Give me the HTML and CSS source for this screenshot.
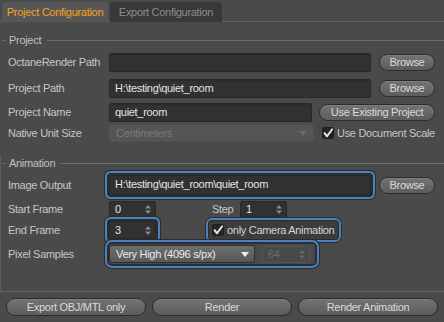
FILE: index.html
```html
<!DOCTYPE html>
<html>
<head>
<meta charset="utf-8">
<link rel="stylesheet" href="styles.css">
</head>
<body>
<div class="app">
  <div class="tabs">
    <div class="tab active">Project Configuration</div>
    <div class="tab inactive">Export Configuration</div>
  </div>

  <section class="group project">
    <div class="legend"><span class="legend-text">Project</span></div>
    <div class="row r-octane">
      <span class="lbl">OctaneRender Path</span>
      <div class="input path"></div>
      <button class="btn browse">Browse</button>
    </div>
    <div class="row r-path">
      <span class="lbl">Project Path</span>
      <div class="input path">H:\testing\quiet_room</div>
      <button class="btn browse">Browse</button>
    </div>
    <div class="row r-name">
      <span class="lbl">Project Name</span>
      <div class="input name">quiet_room</div>
      <button class="btn existing">Use Existing Project</button>
    </div>
    <div class="row r-unit">
      <span class="lbl">Native Unit Size</span>
      <div class="select disabled unit">
        <span>Centimeters</span>
        <svg class="arrow" width="8" height="5" viewBox="0 0 8 5"><path d="M0 0H8L4 5Z" fill="#6a6a6a"/></svg>
      </div>
      <label class="check doc">
        <span class="box"><svg width="12" height="12" viewBox="0 0 12 12"><path d="M2.6 6.2L5 9.3L10.2 2.2" fill="none" stroke="#ececec" stroke-width="1.9" stroke-linecap="round" stroke-linejoin="round"/></svg></span>
        <span>Use Document Scale</span>
      </label>
    </div>
  </section>

  <section class="group animation">
    <div class="legend"><span class="legend-text">Animation</span></div>
    <div class="row r-output">
      <span class="lbl">Image Output</span>
      <div class="input path focus">H:\testing\quiet_room\quiet_room</div>
      <button class="btn browse">Browse</button>
    </div>
    <div class="row r-start">
      <span class="lbl">Start Frame</span>
      <div class="spin"><span>0</span><svg class="updown" width="6" height="9" viewBox="0 0 6 9"><path d="M0 3.5L3 0L6 3.5Z M0 5.5H6L3 9Z" fill="#8a8a8a"/></svg></div>
      <span class="step-lbl">Step</span>
      <div class="spin"><span>1</span><svg class="updown" width="6" height="9" viewBox="0 0 6 9"><path d="M0 3.5L3 0L6 3.5Z M0 5.5H6L3 9Z" fill="#8a8a8a"/></svg></div>
    </div>
    <div class="row r-end">
      <span class="lbl">End Frame</span>
      <div class="spin focus"><span>3</span><svg class="updown" width="6" height="9" viewBox="0 0 6 9"><path d="M0 3.5L3 0L6 3.5Z M0 5.5H6L3 9Z" fill="#8a8a8a"/></svg></div>
      <label class="check cam">
        <span class="box"><svg width="12" height="12" viewBox="0 0 12 12"><path d="M2.6 6.2L5 9.3L10.2 2.2" fill="none" stroke="#ececec" stroke-width="1.9" stroke-linecap="round" stroke-linejoin="round"/></svg></span>
        <span>only Camera Animation</span>
      </label>
    </div>
    <div class="row r-samples">
      <span class="lbl">Pixel Samples</span>
      <div class="samples focus">
        <div class="select quality">
          <span>Very High (4096 s/px)</span>
          <svg class="arrow" width="8" height="5" viewBox="0 0 8 5"><path d="M0 0H8L4 5Z" fill="#f0f0f0"/></svg>
        </div>
        <div class="spin disabled"><span>64</span><svg class="updown" width="6" height="9" viewBox="0 0 6 9"><path d="M0 3.5L3 0L6 3.5Z M0 5.5H6L3 9Z" fill="#666"/></svg></div>
      </div>
    </div>
  </section>

  <div class="actions">
    <button class="btn action">Export OBJ/MTL only</button>
    <button class="btn action">Render</button>
    <button class="btn action">Render Animation</button>
  </div>
</div>
</body>
</html>
```

FILE: styles.css
```css
html, body {
  margin: 0;
  padding: 0;
}
body {
  width: 444px;
  height: 322px;
  overflow: hidden;
  background: #4a4a4a;
  font-family: "Liberation Sans", Arial, sans-serif;
  font-size: 11px;
  letter-spacing: -0.3px;
  white-space: nowrap;
  color: #c6c6c6;
}
.app {
  display: flex;
  flex-direction: column;
}

/* tabs */
.tabs {
  display: flex;
  gap: 2px;
  height: 22px;
  box-sizing: border-box;
  padding: 2px 0 0 2px;
  border-bottom: 1px solid #626262;
}
.tab {
  height: 20px;
  line-height: 20px;
  box-sizing: border-box;
  text-align: center;
  border-radius: 3px 3px 0 0;
}
.tab.active {
  width: 106px;
  background: #575757;
  color: #f5a11e;
}
.tab.inactive {
  width: 112px;
  background: #383838;
  color: #8d8d8d;
}

/* groups */
.group {
  display: flex;
  flex-direction: column;
}
.project {
  margin-top: 11px;
}
.animation {
  margin-top: 12px;
  border-left: 1px solid #5f5f5f;
  border-bottom: 1px solid #666;
  padding-bottom: 27px;
}
.legend {
  display: flex;
  align-items: center;
  height: 14px;
}
.legend::before {
  content: "";
  width: 4px;
  height: 1px;
  margin: 0 3px 0 2px;
  background: #6c6c6c;
}
.animation .legend::before {
  margin-left: 1px;
}
.legend::after {
  content: "";
  flex: 1;
  height: 1px;
  margin-left: 6px;
  background: #6c6c6c;
}
.legend-text {
  color: #c0c0c0;
}

/* rows */
.row {
  display: flex;
  align-items: center;
  height: 22px;
  padding-left: 8px;
}
.animation .row {
  padding-left: 7px;
}
.r-octane { margin-top: 4px; }
.r-path { margin-top: 4px; }
.r-name { margin-top: 2px; }
.r-unit { margin-top: -1px; }
.r-output { margin-top: 4px; }
.r-start { margin-top: 3px; height: 20px; }
.r-end { margin-top: 1px; height: 20px; }
.r-samples { margin-top: 4px; height: 20px; }

.lbl {
  width: 101px;
  flex: none;
  color: #c6c6c6;
}

/* inputs */
.input {
  height: 19px;
  box-sizing: border-box;
  background: #313131;
  border: 1px solid #282828;
  border-radius: 2px;
  box-shadow: inset 0 1px 0 #2a2a2a;
  color: #e4e4e4;
  line-height: 17px;
  padding-left: 5px;
}
.input.path { width: 262px; }
.input.name { width: 203px; }

.focus {
  box-shadow: 0 0 0 2px #2d2d2d, 0 0 0 4px #4c81bd, 0 0 0 5px #2c2c2c;
  border-radius: 2px;
}
.input.focus {
  height: 20px;
}

/* buttons */
.btn {
  font: inherit;
  letter-spacing: inherit;
  color: #dadada;
  height: 17px;
  padding: 0;
  box-sizing: border-box;
  border: 1px solid #2c2c2c;
  border-radius: 9px;
  background: linear-gradient(#747474, #5c5c5c);
  box-shadow: inset 0 1px 0 rgba(255,255,255,0.08);
  line-height: 15px;
  text-align: center;
}
.btn.browse {
  width: 56px;
  margin-left: 8px;
}
.btn.existing {
  width: 116px;
  margin-left: 7px;
}

/* selects */
.select {
  display: flex;
  align-items: center;
  justify-content: space-between;
  height: 18px;
  box-sizing: border-box;
  border-radius: 3px;
  padding: 0 6px 0 6px;
}
.select.disabled {
  width: 205px;
  background: #555;
  color: #7a7a7a;
  border: 1px solid #505050;
}
.select.quality {
  width: 146px;
  background: linear-gradient(#6e6e6e, #585858);
  border: 1px solid #2e2e2e;
  color: #ececec;
  padding-right: 5px;
}

/* checkboxes */
.check {
  display: flex;
  align-items: center;
  gap: 3px;
}
.box {
  width: 12px;
  height: 12px;
  box-sizing: border-box;
  background: #262626;
  border: 1px solid #1e1e1e;
  border-radius: 2px;
  display: flex;
  align-items: center;
  justify-content: center;
  overflow: hidden;
}
.box svg {
  flex: none;
}
.check.doc {
  margin-left: 8px;
}
.check.cam {
  margin-left: 53px;
  height: 18px;
  padding: 0 4px 0 3px;
  background: #3c3c3c;
  border-radius: 3px;
  color: #d4d4d4;
  box-shadow: 0 0 0 1px #2b2b2b, 0 0 0 3px #4c81bd, 0 0 0 4px #2c2c2c;
}

/* spinners */
.spin {
  display: flex;
  align-items: center;
  justify-content: space-between;
  width: 47px;
  height: 17px;
  box-sizing: border-box;
  background: #313131;
  border: 1px solid #282828;
  border-radius: 2px;
  color: #e4e4e4;
  padding: 0 4px 0 5px;
}
.spin.focus {
  height: 18px;
}
.spin.disabled {
  width: 48px;
  background: #494949;
  border: 1px solid #555;
  color: #6b6b6b;
}
.step-lbl {
  margin-left: 56px;
  width: 28px;
  color: #c6c6c6;
}

.samples {
  display: flex;
  align-items: center;
  gap: 7px;
  padding: 1px 5px 1px 0;
  border-radius: 3px;
}

/* actions */
.actions {
  display: flex;
  gap: 6px;
  padding: 6px 6px 0 6px;
}
.btn.action {
  flex: 1;
  height: 18px;
  line-height: 16px;
}
```
